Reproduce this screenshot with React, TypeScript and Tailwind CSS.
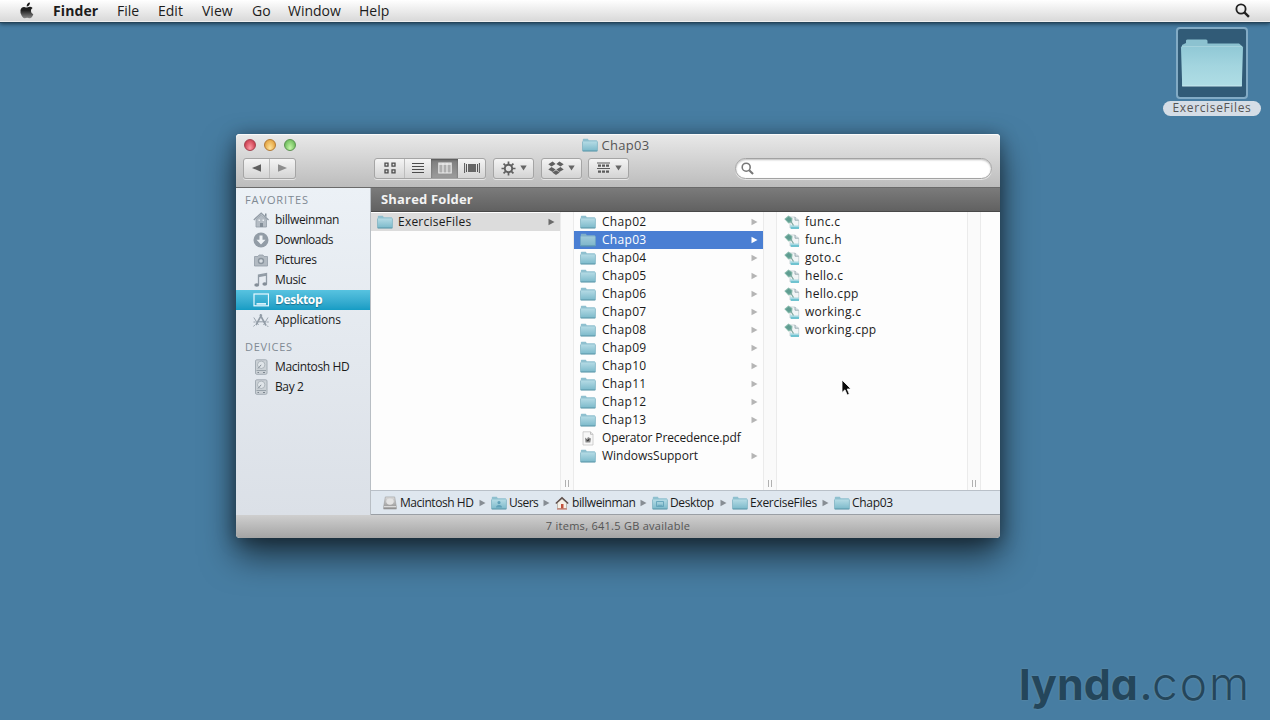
import type { ReactNode } from 'react';

const SIDEBAR_FAVORITES = [
  { label: 'billweinman', icon: 'home', track: 'tracking-[-0.36px]' },
  { label: 'Downloads', icon: 'download', track: 'tracking-[-0.5px]' },
  { label: 'Pictures', icon: 'camera', track: 'tracking-[-0.45px]' },
  { label: 'Music', icon: 'music', track: 'tracking-[-0.35px]' },
  { label: 'Desktop', icon: 'desktop', track: 'tracking-[-0.35px]', active: true },
  { label: 'Applications', icon: 'apps', track: 'tracking-[-0.22px]' },
];

const SIDEBAR_DEVICES = [
  { label: 'Macintosh HD', icon: 'disk', track: 'tracking-[-0.38px]' },
  { label: 'Bay 2', icon: 'disk', track: 'tracking-[-0.38px]' },
];

const FOLDERS = ['Chap02', 'Chap03', 'Chap04', 'Chap05', 'Chap06', 'Chap07', 'Chap08', 'Chap09', 'Chap10', 'Chap11', 'Chap12', 'Chap13', 'Operator Precedence.pdf', 'WindowsSupport'];

const FILES = ['func.c', 'func.h', 'goto.c', 'hello.c', 'hello.cpp', 'working.c', 'working.cpp'];

function Gradients() {
  return (
    <svg width="0" height="0" className="absolute">
      <defs>
        <linearGradient id="folder" x1="0" y1="0" x2="0" y2="1">
          <stop offset="0" stopColor="#b5dbe5" />
          <stop offset="1" stopColor="#7bb9ca" />
        </linearGradient>
        <linearGradient id="bigfolder" x1="0" y1="0" x2="0" y2="1">
          <stop offset="0" stopColor="#90c8d5" />
          <stop offset="0.5" stopColor="#a3d5df" />
          <stop offset="1" stopColor="#afdde5" />
        </linearGradient>
        <linearGradient id="apple" x1="0" y1="0" x2="0" y2="1">
          <stop offset="0" stopColor="#111" />
          <stop offset="0.5" stopColor="#222" />
          <stop offset="1" stopColor="#8a8a8a" />
        </linearGradient>
        <linearGradient id="drive" x1="0" y1="0" x2="0" y2="1">
          <stop offset="0" stopColor="#dcdcdc" />
          <stop offset="1" stopColor="#8e8e8e" />
        </linearGradient>
      </defs>
    </svg>
  );
}

function FolderIcon({ dim = false, mark = '' }: { dim?: boolean; mark?: string }) {
  return (
    <svg width="16" height="14" viewBox="0 0 16 14" className="shrink-0">
      <path d="M.8 12.500V1.800Q.8.800 1.600.800H5.800L6.800 2.200H14.400q.8 0 .8.800V12.500Z" fill={dim ? '#7fb0c9' : '#8fc0cf'} />
      <path d="M.4 3.500H15.600L15.300 13H.7Z" fill="url(#folder)" opacity={dim ? 0.6 : 1} />
      <path d="M.7 13H15.300" stroke="#5c97aa" strokeWidth="1.100" />
      <path d="M15.400 3.500V13M.5 3.500V13" stroke="#72a9bb" strokeWidth=".6" />
      {mark === 'user' && <path d="M8 5a1.600 1.600 0 1 1 0 3.200A1.600 1.600 0 0 1 8 5M5 11.500q0-2.600 3-2.600t3 2.600Z" fill="#5fa0b8" />}
      {mark === 'desk' && <path d="M4.500 5.500h7v5h-7ZM5.500 9.300h5" fill="none" stroke="#5b9db5" strokeWidth=".8" />}
    </svg>
  );
}

function DocIcon() {
  return (
    <svg width="16" height="15" viewBox="0 0 16 15" className="shrink-0">
      <path d="M6 2h5l3.700 3.200V13H6Z" fill="#f1f5f6" stroke="#b9c5ca" strokeWidth=".7" />
      <path d="M11 2v3.200h3.700" fill="#dde5e8" stroke="#8d9fa6" strokeWidth=".8" />
      <path d="M6 10.800h9V14H7Z" fill="#6fc3d0" />
      <path d="M6 9.500q4 1.800 9 1.300v1H6Z" fill="#b8e0e7" />
      <path d="M.3 4 4.500.5 8.500 3.300 8 7.300 4.500 8.500Z" fill="#86b9ab" />
      <path d="M1.500 4.200 4.600 1.700l2.800 2-.4 2.600-2.400.8Z" fill="#4f9186" opacity=".7" />
      <path d="M7 6.500 9.500 10.500" stroke="#7fa8a0" strokeWidth="1.300" />
    </svg>
  );
}

function PdfIcon() {
  return (
    <svg width="16" height="15" viewBox="0 0 16 15" className="shrink-0">
      <path d="M3 .8h7.500l2.500 2.500V14H3Z" fill="#f7f7f7" stroke="#c4c4c4" strokeWidth=".8" />
      <path d="M10.500.8v2.500H13" fill="none" stroke="#b5b5b5" strokeWidth=".8" />
      <path d="M5 6.500 7 8l1-2 3 1.500-.7 4H5.500Z" fill="#8a8a8a" />
      <path d="m6.500 9 1.500 1 1-2" fill="none" stroke="#333" />
    </svg>
  );
}

function SideIcon({ name }: { name: string }) {
  const c = '#929ca6';
  return (
    <svg width="16" height="16" viewBox="0 0 16 16" className="shrink-0">
      {name === 'home' && (
        <>
          <path d="M3 7.500V15H13.500V7.500L8.200 3Z" fill="#b4bcc4" stroke={c} strokeWidth=".8" />
          <path d="M.8 8 8.200 1.300 15.600 8" fill="none" stroke={c} strokeWidth="1.400" />
          <path d="M12 1.500h1.500V5L12 3.700ZM7 15v-4H10V15Z" fill="#838e98" />
          <path d="M5.500 7.500h1.500v1.500H5.500ZM9.500 7.500H11v1.500H9.500Z" fill="#e9eef2" />
        </>
      )}
      {name === 'download' && (
        <>
          <circle cx="8" cy="8" r="7.500" fill={c} />
          <path d="M6.500 3.500h3v4.200h3L8 12.500 3.500 7.700h3Z" fill="#eef2f5" />
        </>
      )}
      {name === 'camera' && (
        <>
          <path d="M1.500 4.500H5L6 3h4l1 1.500h3.500V14h-13Z" fill="#b2bac2" stroke={c} strokeWidth=".8" />
          <circle cx="8" cy="9" r="3.200" fill="#8a949e" />
          <circle cx="8" cy="9" r="1.800" fill="#d9dfe4" />
        </>
      )}
      {name === 'music' && (
        <>
          <path d="M5.500 12.500V3L13.500 1.500v10" fill="none" stroke={c} strokeWidth="1.300" />
          <path d="M5.500 3.300 13.500 1.800v2l-8 1.500Z" fill={c} />
          <ellipse cx="3.800" cy="13" rx="2.400" ry="1.800" fill="#848e98" />
          <ellipse cx="11.800" cy="12" rx="2.400" ry="1.800" fill="#848e98" />
        </>
      )}
      {name === 'desktop' && (
        <>
          <rect x="1" y="2" width="14.500" height="11.800" fill="none" stroke="#e8f8ff" strokeWidth="1.200" />
          <path d="M3.500 11h9.500v1.800H3.500Z" fill="#d8f1fa" />
        </>
      )}
      {name === 'apps' && (
        <g fill="none" stroke={c}>
          <path d="M3 13 8.700 2.500M7 2.500 13 13.500" strokeWidth="1.600" />
          <path d="M4.500 9.800h8" strokeWidth="1" />
          <path d="M.5 10h2M13.500 10h2.300M.5 14.500 1.800 13M14 13.500l1.300 1.500M.8 5.500 5.500 13M15 5.500 10.500 13" strokeWidth=".9" />
        </g>
      )}
      {name === 'disk' && (
        <>
          <rect x="2.500" y=".8" width="11.500" height="14.500" rx="1.300" fill="#cbd1d6" stroke="#a3acb4" />
          <circle cx="8.200" cy="5.800" r="3.700" fill="#dfe4e8" stroke="#a2abb3" strokeWidth=".8" />
          <path d="M8.200 5.800 5 9.500" stroke="#87919a" />
          <path d="M3.500 11.500H13" stroke="#98a2aa" />
          <path d="M4.500 13.500h1.500M10 13.500h2" stroke="#7a848e" />
        </>
      )}
    </svg>
  );
}

function Triangle({ color, className = '' }: { color: string; className?: string }) {
  return (
    <svg width="7" height="8" viewBox="0 0 7 8" className={`shrink-0 ${className}`}>
      <path d="M.5.8 6.500 4 .5 7.200Z" fill={color} />
    </svg>
  );
}

function SearchIcon({ color, size, w }: { color: string; size: number; w: number }) {
  return (
    <svg width={size} height={size} viewBox="0 0 14 14" className="shrink-0">
      <circle cx="5.600" cy="5.600" r="4.300" fill="none" stroke={color} strokeWidth={w} />
      <path d="m8.800 8.800 4.200 4.200" stroke={color} strokeWidth={w + 0.5} />
    </svg>
  );
}

function MenuBar() {
  return (
    <header className="flex h-[22px] items-center border-b border-[#eee] bg-linear-to-b from-white to-[#d9d9d9] font-['Open_Sans',sans-serif] text-[14px] leading-[22px] text-[#1c1c1c] shadow-[0_1px_0_#24445a,0_2px_4px_#1c3a50]">
      <svg width="16" height="18" viewBox="0 0 16 18" className="ml-[19px] mr-[18px] shrink-0">
        <path d="M10.900.5q.2 1.600-.8 2.800T7.700 4.500q-.2-1.500.8-2.700T10.900.5M13.600 6q-1.800 1.100-1.700 3.100.1 2.300 2.400 3.200-1.400 3.900-3.400 4-.8 0-1.600-.4-1.200-.5-2.500.1-.7.300-1.400.3-1.200-.1-2.600-2.300-1.900-3.100-1.300-6Q2.300 5 5.100 4.900q.8 0 1.800.5.900.3 1.900-.1 2.900-1.200 4.800.7" fill="url(#apple)" />
      </svg>
      <nav className="flex">
        <span className="w-[64px] font-bold tracking-[0.1px]">Finder</span>
        <span className="w-[41px]">File</span>
        <span className="w-[44px]">Edit</span>
        <span className="w-[50px]">View</span>
        <span className="w-[36px]">Go</span>
        <span className="w-[71px]">Window</span>
        <span className="w-[40px]">Help</span>
      </nav>
      <span className="ml-auto mr-[20px]"><SearchIcon color="#222" size={15} w={1.7} /></span>
    </header>
  );
}

function ToolButton({ children, className = '' }: { children: ReactNode; className?: string }) {
  return (
    <div className={`flex h-[21px] items-center rounded-[3px] border border-[#a5a5a5] bg-linear-to-b from-[#f4f4f4] to-[#d4d4d4] shadow-[0_1px_0_#e6e6e6] ${className}`}>
      {children}
    </div>
  );
}

function DownCaret() {
  return (
    <svg width="7" height="6" viewBox="0 0 7 6" className="ml-auto">
      <path d="M.3.5h6.400L3.500 5.500Z" fill="#666" />
    </svg>
  );
}

function TrafficLight({ className }: { className: string }) {
  return <span className={`size-[12px] rounded-full border ${className}`} />;
}

function Toolbar() {
  return (
    <div className="h-[54px] rounded-t-[4px] border-b border-[#6a6a6a] bg-linear-to-b from-[#e9e9e9] to-[#bcbcbc] shadow-[inset_0_1px_0_#fafafa]">
      <div className="flex h-[22px] items-center pl-[7.500px]">
        <div className="flex w-[338px] gap-[8px]">
          <TrafficLight className="border-[#a3434f] bg-radial-[at_50%_80%] from-[#ff9aa5] to-[#bd2438]" />
          <TrafficLight className="border-[#b27a35] bg-radial-[at_50%_80%] from-[#ffe39a] to-[#dc9228]" />
          <TrafficLight className="border-[#5c9351] bg-radial-[at_50%_80%] from-[#c4f7a8] to-[#57ac48]" />
        </div>
        <FolderIcon />
        <span className="ml-[4px] text-[13px] leading-[20px] tracking-[0.3px] text-[#555]">Chap03</span>
      </div>
      <div className="flex h-[23px] items-center pl-[7px] pt-px">
        <ToolButton className="w-[53px]">
          <span className="flex h-full w-[26px] items-center justify-center border-r border-[#bcbcbc]">
            <svg width="9" height="8" viewBox="0 0 9 8"><path d="M9 .3 0 4l9 3.700Z" fill="#5f5f5f" /></svg>
          </span>
          <span className="flex flex-1 justify-center">
            <svg width="9" height="8" viewBox="0 0 9 8"><path d="m0 .3 9 3.700-9 3.700Z" fill="#8d8d8d" /></svg>
          </span>
        </ToolButton>
        <ToolButton className="ml-[78px] w-[112px]">
          <span className="flex h-full w-[30px] items-center justify-center border-r border-[#bcbcbc]">
            <svg width="12" height="12" viewBox="0 0 12 12" fill="none" stroke="#4c4c4c" strokeWidth="1.300"><path d="M1 1.200h3v3H1ZM8 1.200h3v3H8ZM1 7.800h3v3H1ZM8 7.800h3v3H8Z" /></svg>
          </span>
          <span className="flex h-full w-[26px] items-center justify-center">
            <svg width="12" height="12" viewBox="0 0 12 12" stroke="#4c4c4c" strokeWidth="1.200"><path d="M0 1.500h12M0 4.500h12M0 7.500h12M0 10.500h12" /></svg>
          </span>
          <span className="flex h-full w-[27px] items-center justify-center bg-linear-to-b from-[#7c7c7c] to-[#9c9c9c] shadow-[inset_0_1px_2px_#555]">
            <svg width="14" height="12" viewBox="0 0 14 12" fill="#aeaeae" stroke="#ececec" strokeWidth="1.100"><path d="M.8 1h12.400v10H.8ZM5 1v10M9 1v10M1 2.200h12" /></svg>
          </span>
          <span className="flex h-full w-[27px] items-center justify-center">
            <svg width="16" height="12" viewBox="0 0 16 12"><path d="M4 2h8v8H4Z" fill="#666" /><path d="M.6 1v10M2.500 2v8M13.500 2v8M15.400 1v10" stroke="#555" strokeWidth="1" /></svg>
          </span>
        </ToolButton>
        <ToolButton className="ml-[7px] w-[41px] pl-[7px] pr-[6px]">
          <svg width="15" height="15" viewBox="0 0 15 15" fill="none" stroke="#606060">
            <circle cx="7.500" cy="7.500" r="3.700" strokeWidth="2" />
            <path d="M7.500.5v3M7.500 11.500v3M.5 7.500h3M11.500 7.500h3M2.550 2.550l2.100 2.100M10.350 10.350l2.100 2.100M2.550 12.450l2.100-2.100M10.350 4.650l2.100-2.100" strokeWidth="1.700" />
          </svg>
          <DownCaret />
        </ToolButton>
        <ToolButton className="ml-[7px] w-[41px] pl-[6px] pr-[6px]">
          <svg width="16" height="14" viewBox="0 0 16 14" fill="#606060">
            <path d="M4.600.5 7.600 3.100 3.500 5.500.3 3.300ZM11.400.5 8.400 3.100l4.100 2.400 3.200-2.200ZM.3 8.400 3.500 6.100 7.600 8.500 4.700 11ZM15.700 8.400 12.500 6.100 8.400 8.500 11.300 11ZM4.300 11.600 8 9.300l3.700 2.300L8 13.900Z" />
          </svg>
          <DownCaret />
        </ToolButton>
        <ToolButton className="ml-[6px] w-[41px] pl-[8px] pr-[6px]">
          <svg width="13" height="12" viewBox="0 0 13 12" stroke="#5c5c5c" fill="none">
            <path d="M0 1h13M0 6.500h13" strokeWidth="1.200" />
            <path d="M1 3.600h11M1 9.600h11" strokeWidth="2.400" strokeDasharray="3 1" />
          </svg>
          <DownCaret />
        </ToolButton>
        <div className="ml-[106px] flex h-[21px] w-[257px] items-center rounded-full border border-[#a2a2a2] bg-white pl-[5px] shadow-[inset_0_1px_2px_#bbb,0_1px_0_#e6e6e6]">
          <SearchIcon color="#777" size={13} w={1.7} />
        </div>
      </div>
    </div>
  );
}

function SideRow({ label, icon, track, active = false }: { label: string; icon: string; track: string; active?: boolean }) {
  return (
    <li className={`flex h-[20px] items-center pl-[17px] ${active ? 'bg-linear-to-b from-[#57c3e0] to-[#149cc4] font-bold text-white [text-shadow:0_1px_1px_#1a6f8c]' : 'font-medium'}`}>
      <SideIcon name={icon} />
      <span className={`ml-[6px] ${track}`}>{label}</span>
    </li>
  );
}

function Sidebar() {
  return (
    <aside className="w-[135px] shrink-0 border-r border-[#b8bec4] bg-linear-to-b from-[#ecf1f6] to-[#dbe0e7] pt-[2px] text-[12px] text-[#1b1b1b]">
      <h2 className="h-[20px] pl-[9px] text-[11px] font-medium leading-[19px] tracking-[0.9px] text-[#7f8993]">FAVORITES</h2>
      <ul>{SIDEBAR_FAVORITES.map((r) => <SideRow key={r.label} {...r} />)}</ul>
      <h2 className="mt-[7px] h-[20px] pl-[9px] text-[11px] font-medium leading-[19px] tracking-[0.7px] text-[#7f8993]">DEVICES</h2>
      <ul>{SIDEBAR_DEVICES.map((r) => <SideRow key={r.label} {...r} />)}</ul>
    </aside>
  );
}

function Gutter() {
  return (
    <div className="flex w-[14px] shrink-0 items-end justify-center border-x border-[#ebebeb] bg-[#fafafa] pb-[3px]">
      <span className="h-[7px] w-[4px] border-x border-[#b0b0b0]" />
    </div>
  );
}

function Columns() {
  return (
    <div className="flex h-[279px] bg-[#fdfdfd] text-[12px] leading-[18px] text-[#1b1b1b]">
      <ul className="w-[189px] shrink-0 pt-px">
        <li className="flex h-[18px] items-center bg-[#dcdcdc] pl-[6px] pr-[5px]">
          <FolderIcon />
          <span className="ml-[5px] tracking-[0.22px]">ExerciseFiles</span>
          <Triangle color="#6a6a6a" className="ml-auto" />
        </li>
      </ul>
      <Gutter />
      <ul className="w-[189px] shrink-0 pt-px">
        {FOLDERS.map((name) => {
          const on = name === 'Chap03';
          const pdf = name.endsWith('.pdf');
          const track = pdf ? 'tracking-[-0.13px]' : name.startsWith('Chap') ? 'tracking-[0.3px]' : 'tracking-normal';
          return (
            <li key={name} className={`flex h-[18px] items-center pl-[6px] pr-[5px] ${on ? 'bg-[#4a7fd3] text-white' : ''}`}>
              {pdf ? <PdfIcon /> : <FolderIcon dim={on} />}
              <span className={`ml-[6px] ${track}`}>{name}</span>
              {!pdf && <Triangle color={on ? '#fff' : '#b5b5b5'} className="ml-auto" />}
            </li>
          );
        })}
      </ul>
      <Gutter />
      <ul className="w-[190px] shrink-0 pt-px">
        {FILES.map((name) => (
          <li key={name} className="flex h-[18px] items-center pl-[7px]">
            <DocIcon />
            <span className="ml-[5px] tracking-[0.3px]">{name}</span>
          </li>
        ))}
      </ul>
      <Gutter />
    </div>
  );
}

function Separator() {
  return <Triangle color="#878d94" className="ml-[5px] mr-[5px]" />;
}

function PathBar() {
  return (
    <div className="flex h-[25px] items-center whitespace-nowrap border-y border-b-[#9a9fa5] border-t-[#b9c0c8] bg-[#dfe7ef] pl-[12px] text-[12px] font-medium leading-[22px] text-[#1b1b1b]">
      <svg width="14" height="14" viewBox="0 0 15 14" className="mr-[3px] shrink-0">
        <path d="M2.500.5h10L14.300 11v2.500H.7V11Z" fill="url(#drive)" stroke="#9a9a9a" strokeWidth=".6" />
        <path d="M1 11h13" stroke="#f2f2f2" />
        <ellipse cx="7.500" cy="5.500" rx="4" ry="3.300" fill="#e3e3e3" />
      </svg>
      <span className="w-[74px] tracking-[-0.45px]">Macintosh HD</span>
      <Separator />
      <FolderIcon mark="user" />
      <span className="ml-[2px] w-[29px] tracking-[-0.5px]">Users</span>
      <Separator />
      <svg width="14" height="14" viewBox="0 0 14 14" className="mr-[3px] shrink-0">
        <path d="M2.500 6.500V12.500H11.500V6.500L7 3Z" fill="#f5f0e8" stroke="#b5aca0" strokeWidth=".8" />
        <path d="M.8 7.500 7 1.700 13.200 7.500" fill="none" stroke="#5c4c48" strokeWidth="1.400" />
        <path d="M6 8h2.500v4.500H6Z" fill="#c2523c" />
        <path d="M2 13h10" stroke="#c0604c" />
      </svg>
      <span className="w-[63px] tracking-[-0.42px]">billweinman</span>
      <Separator />
      <FolderIcon mark="desk" />
      <span className="ml-[2px] w-[45px] tracking-[-0.38px]">Desktop</span>
      <Separator />
      <FolderIcon />
      <span className="ml-[2px] w-[67px] tracking-[-0.28px]">ExerciseFiles</span>
      <Separator />
      <FolderIcon />
      <span className="ml-[2px] tracking-[-0.3px]">Chap03</span>
    </div>
  );
}

function FinderWindow() {
  return (
    <main className="absolute left-[236px] top-[134px] flex h-[404px] w-[764px] flex-col rounded-[4px] bg-white font-['Open_Sans',sans-serif] shadow-[0_18px_34px_rgba(0,0,0,0.6),0_2px_18px_rgba(0,0,0,0.35)]">
      <Toolbar />
      <div className="flex h-[327px]">
        <Sidebar />
        <section className="flex min-w-0 flex-1 flex-col">
          <div className="h-[24px] border-b border-[#484848] bg-linear-to-b from-[#7b7b7b] to-[#616161] pl-[10px] text-[13px] font-bold leading-[23px] tracking-[0.17px] text-[#f3f3f3]">Shared Folder</div>
          <Columns />
          <PathBar />
        </section>
      </div>
      <footer className="flex-1 rounded-b-[4px] bg-linear-to-b from-[#cfcfcf] to-[#a4a4a4] text-center text-[11px] leading-[21px] tracking-[0.27px] text-[#555]">7 items, 641.5 GB available</footer>
    </main>
  );
}

function DesktopFolder() {
  return (
    <div className="absolute left-[1162px] top-[27px] flex w-[100px] flex-col items-center font-['Open_Sans',sans-serif]">
      <div className="flex h-[72px] w-[72px] items-center justify-center rounded-[4px] border-2 border-[#82abc5] bg-[#315b77] pt-[2px]">
        <svg width="64" height="52" viewBox="0 0 64 52">
          <path d="M2 48V7L6 5V2.500Q6.500 1.500 7.500 1.500H26Q27.500 1.500 27.500 3V5.500H59L62 8V48Z" fill="#8cc2d0" />
          <path d="M1 9.500Q1 8 2.500 8H61.500Q63 8 63 9.500L61.800 48H2.200Z" fill="url(#bigfolder)" />
          <path d="M2 8.500H62" stroke="#a5d2dc" />
          <path d="M2.200 48H61.800" stroke="#c9e8ee" />
        </svg>
      </div>
      <div className="mt-[2px] h-[15px] w-[98px] rounded-full bg-[#d5dde6] text-center text-[12px] font-medium leading-[14px] tracking-[0.65px] text-[#555]">ExerciseFiles</div>
    </div>
  );
}

export default function App() {
  return (
    <div className="relative h-[720px] w-[1270px] overflow-hidden bg-[#477da2]">
      <Gradients />
      <MenuBar />
      <DesktopFolder />
      <FinderWindow />
      <svg width="11" height="18" viewBox="0 0 11 18" className="absolute left-[841px] top-[379px]">
        <path d="M1 1V13.500L4 10.800 6.200 16 8.300 15 6.200 10H10Z" fill="#0a0a0a" stroke="#fff" strokeWidth=".8" />
      </svg>
      <div className="absolute left-[1019px] top-[656px] flex items-baseline font-['Inter',sans-serif] text-[43px] leading-[54px] text-[#24465b] [font-feature-settings:'cv11'] [text-shadow:0_0_2px_#6d95ad]">
        <span className="w-[121px] font-bold">lynda</span>
        <span className="w-[12px] text-[36px] font-bold">.</span>
        <span className="text-[46px] font-light tracking-[2px]">com</span>
      </div>
    </div>
  );
}
